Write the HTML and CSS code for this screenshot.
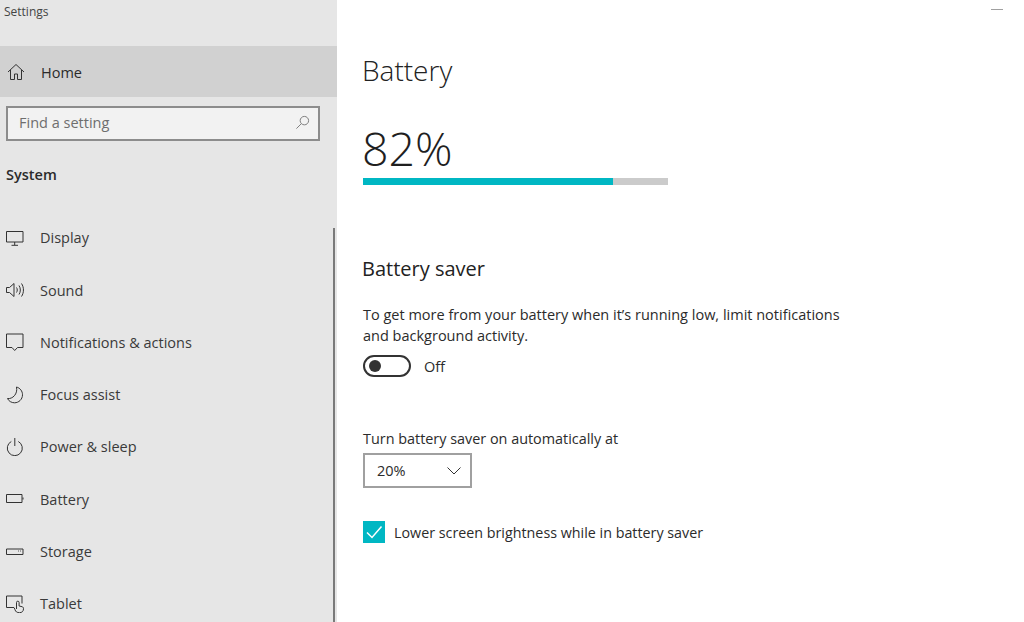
FILE: index.html
```html
<!DOCTYPE html>
<html lang="en">
<head>
    <meta charset="UTF-8">
    <meta name="viewport" content="width=device-width, initial-scale=1.0">
    <title>Settings - Battery</title>
    <link rel="stylesheet" href="styles.css">
</head>
<body>
    <aside class="sidebar">
        <div class="app-title">Settings</div>
        <a class="home-row">
            <svg class="nav-icon" viewBox="0 0 18 18"><path d="M1 9 9 1.500 17 9M3.500 7v9.500h4V11h3v5.500h4V7"/></svg>
            <span>Home</span>
        </a>
        <div class="search-box">
            <span>Find a setting</span>
            <svg class="search-icon" viewBox="0 0 16 16"><circle cx="10" cy="6" r="4.500"/><path d="M6.700 9.300 1.500 14.500"/></svg>
        </div>
        <div class="group-title">System</div>
        <nav class="nav-list">
            <a class="nav-item">
                <svg class="nav-icon" viewBox="0 0 18 18"><path d="M.5 2.500h16.500v10.500H.5zM8.700 13v3M5.500 16.300h6.500"/></svg>
                <span>Display</span>
            </a>
            <a class="nav-item">
                <svg class="nav-icon" viewBox="0 0 18 18"><path d="M.5 6.500h3L8 2.500v13l-4.500-4h-3zM10.500 6.500c1 1.500 1 3.500 0 5M13 4.500c1.800 2.700 1.800 6.300 0 9M15.500 2.500c2.600 3.800 2.600 9.200 0 13"/></svg>
                <span>Sound</span>
            </a>
            <a class="nav-item">
                <svg class="nav-icon" viewBox="0 0 18 18"><path d="M.5 1h16.500v13.500h-5.500L8.700 17.500 6 14.500H.5z"/></svg>
                <span>Notifications &amp; actions</span>
            </a>
            <a class="nav-item">
                <svg class="nav-icon" viewBox="0 0 18 18"><path d="M10.500 1c3.500 1 6 4 6 7.800 0 4.500-3.700 8-8 8-3 0-5.800-1.700-7-4.300 5 .8 10.500-4.500 9-11.500z"/></svg>
                <span>Focus assist</span>
            </a>
            <a class="nav-item">
                <svg class="nav-icon" viewBox="0 0 18 18"><path d="M5.300 3.500a7.500 7.500 0 1 0 7 0M8.800 0v8"/></svg>
                <span>Power &amp; sleep</span>
            </a>
            <a class="nav-item">
                <svg class="nav-icon" viewBox="0 0 18 18"><path d="M.5 4.500h15.500v8H.5zM17 7.500v2"/></svg>
                <span>Battery</span>
            </a>
            <a class="nav-item">
                <svg class="nav-icon" viewBox="0 0 18 18"><path d="M.5 6h16.500v5.500H.5zM12 8h.8M14 8h.8"/></svg>
                <span>Storage</span>
            </a>
            <a class="nav-item">
                <svg class="nav-icon" viewBox="0 0 18 18"><path d="M8 12.500H.5V1h15.500v7.500M10.500 14V7.500a1.300 1.300 0 0 1 2.600 0V11l3 .7c1 .3 1.400 1 1.400 2 0 2.500-1.500 4-4 4s-4-1-4.500-3l-.8-2"/></svg>
                <span>Tablet</span>
            </a>
        </nav>
        <div class="scroll-thumb"></div>
    </aside>

    <main class="content">
        <div class="minimize"></div>
        <h1>Battery</h1>
        <div class="percent">82%</div>
        <div class="meter"><div class="meter-fill" style="width: 82%"></div></div>

        <h2>Battery saver</h2>
        <p class="desc">To get more from your battery when it’s running low, limit notifications and background activity.</p>
        <div class="toggle-row">
            <div class="toggle"><div class="knob"></div></div>
            <span>Off</span>
        </div>

        <div class="select-label">Turn battery saver on automatically at</div>
        <div class="select-box">
            <span>20%</span>
            <svg class="chevron" viewBox="0 0 14 8"><path d="M.5.500 7 7l6.500-6.500"/></svg>
        </div>

        <div class="check-row">
            <div class="checkbox">
                <svg viewBox="0 0 22 22"><path d="M4 11.500 9 16.500 18.500 5.500"/></svg>
            </div>
            <span>Lower screen brightness while in battery saver</span>
        </div>
    </main>
</body>
</html>
```

FILE: styles.css
```css
* {
    box-sizing: border-box;
}
html, body {
    height: 100%;
}
body {
    margin: 0;
    display: flex;
    overflow: hidden;
    background: #fff;
    color: #2b2b2b;
    font-family: "Open Sans", "Noto Sans", Arial, sans-serif;
    font-size: 14.5px;
}
svg {
    fill: none;
    stroke: #333;
    stroke-width: 1;
}

/* left pane */
.sidebar {
    position: relative;
    width: 337px;
    flex-shrink: 0;
    overflow: hidden;
    background: #e6e6e6;
}
.app-title {
    height: 46px;
    padding: 3px 0 0 4px;
    font-size: 12px;
    line-height: 17px;
    color: #444;
}
.home-row {
    display: flex;
    align-items: center;
    height: 51px;
    padding: 1px 0 0 7px;
    background: #d1d1d1;
}
.nav-icon {
    width: 18px;
    height: 18px;
    margin-right: 16px;
    flex-shrink: 0;
}
.search-box {
    display: flex;
    align-items: center;
    justify-content: space-between;
    width: 314px;
    height: 35px;
    margin: 9px 0 0 6px;
    padding: 0 8px 2px 11px;
    border: 2px solid #8c8c8c;
    background: #f2f2f2;
    color: #6e6e6e;
}
.search-icon {
    width: 15px;
    height: 15px;
    stroke: #777;
}
.group-title {
    margin: 24px 0 0 6px;
    font-weight: 600;
    line-height: 20px;
}
.nav-list {
    display: flex;
    flex-direction: column;
    margin-top: 26.600px;
}
.nav-item {
    display: flex;
    align-items: center;
    height: 52.300px;
    padding-left: 6px;
    color: #3a3a3a;
}
.scroll-thumb {
    position: absolute;
    top: 228px;
    bottom: 0;
    right: 2px;
    width: 2px;
    background: #7a7a7a;
}

/* right pane */
.content {
    position: relative;
    flex: 1;
    padding: 50px 0 0 25px;
}
.minimize {
    position: absolute;
    top: 9px;
    right: 21px;
    width: 12px;
    height: 1px;
    background: #a0a0a0;
}
h1 {
    margin: 0;
    font-size: 28px;
    font-weight: 300;
    line-height: 40px;
    color: #222;
}
.percent {
    margin-top: 28px;
    font-size: 46.500px;
    font-weight: 300;
    line-height: 60px;
    color: #1f1f1f;
}
.meter {
    width: 305px;
    height: 7px;
    margin-left: 1px;
    background: #cbcbcb;
}
.meter-fill {
    height: 100%;
    background: #00b7c3;
}
h2 {
    margin: 70px 0 0;
    font-size: 20px;
    font-weight: 400;
    line-height: 28px;
    color: #222;
}
.desc {
    width: 490px;
    margin: 21px 0 0 1px;
    line-height: 21px;
}
.toggle-row {
    display: flex;
    align-items: center;
    gap: 13px;
    margin: 9px 0 0 1px;
}
.toggle {
    display: flex;
    align-items: center;
    width: 48px;
    height: 22px;
    padding-left: 4px;
    border: 2px solid #333;
    border-radius: 11px;
}
.knob {
    width: 12px;
    height: 12px;
    border-radius: 50%;
    background: #333;
}
.select-label {
    margin: 52px 0 0 1px;
    font-size: 14.400px;
    line-height: 20px;
}
.select-box {
    display: flex;
    align-items: center;
    justify-content: space-between;
    width: 109px;
    height: 35px;
    margin: 4px 0 0 1px;
    padding: 0 9px 0 12px;
    border: 2px solid #a0a0a0;
}
.chevron {
    width: 14px;
    height: 8px;
}
.check-row {
    display: flex;
    align-items: center;
    gap: 9px;
    margin: 33px 0 0 1px;
    font-size: 14.300px;
}
.checkbox {
    width: 22px;
    height: 22px;
    background: #00b7c3;
}
.checkbox svg {
    display: block;
    stroke: #fff;
    stroke-width: 1.500;
}
```
